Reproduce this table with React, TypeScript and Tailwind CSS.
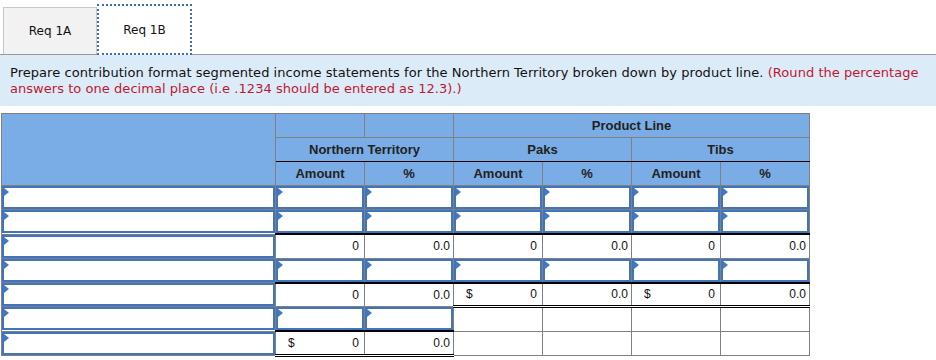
import React from 'react'

type Cell =
  | { k: 'in' }
  | { k: 'v'; t: string; d?: boolean }
  | { k: 'e' }

type Row = { cells: Cell[]; top?: boolean[]; dbl?: boolean[] }

const IN: Cell = { k: 'in' }
const E: Cell = { k: 'e' }
const v = (t: string, d?: boolean): Cell => ({ k: 'v', t, d })

const rows: Row[] = [
  { cells: [IN, IN, IN, IN, IN, IN, IN] },
  { cells: [IN, IN, IN, IN, IN, IN, IN] },
  {
    cells: [IN, v('0'), v('0.0'), v('0'), v('0.0'), v('0'), v('0.0')],
    top: [false, true, true, true, true, true, true],
  },
  { cells: [IN, IN, IN, IN, IN, IN, IN] },
  {
    cells: [IN, v('0'), v('0.0'), v('0', true), v('0.0'), v('0', true), v('0.0')],
    top: [false, true, true, true, true, true, true],
    dbl: [false, false, false, true, true, true, true],
  },
  { cells: [IN, IN, IN, E, E, E, E] },
  {
    cells: [IN, v('0', true), v('0.0'), E, E, E, E],
    top: [false, true, true, false, false, false, false],
    dbl: [false, true, true, false, false, false, false],
  },
]

function InputBox() {
  return (
    <div className="relative h-[23px] border-2 border-[#4074bb] bg-white">
      <span className="absolute left-0 top-0 h-0 w-0 border-y-[4px] border-l-[5px] border-y-transparent border-l-[#3f78c4]" />
    </div>
  )
}

function DataCell({ cell, top, dbl, pct }: { cell: Cell; top?: boolean; dbl?: boolean; pct: boolean }) {
  const cls = [
    'h-[24px] border border-[#808080] p-0 align-middle',
    top ? 'border-t-2 border-t-black' : '',
    dbl ? 'border-b-[3px] border-b-black border-double' : '',
  ].join(' ')
  if (cell.k === 'in') {
    return (
      <td className={cls}>
        <InputBox />
      </td>
    )
  }
  if (cell.k === 'e') return <td className={cls} />
  return (
    <td className={cls}>
      <div className={`flex items-center justify-between text-[12px] text-[#111] ${pct ? 'pr-[3px]' : 'pr-[5px]'} pl-[12px]`}>
        <span>{cell.d ? '$' : ''}</span>
        <span>{cell.t}</span>
      </div>
    </td>
  )
}

export default function App() {
  const head = 'border border-[#808080] bg-[#7aade5] p-0 text-center text-[13px] font-bold text-[#222]'
  return (
    <div className="h-[360px] w-[936px] overflow-hidden bg-white font-['Liberation_Sans',Arial,sans-serif]">
      <div className="flex h-[55px] items-end border-b border-[#9a9a9a] pl-[3px] font-['DejaVu_Sans',Verdana,sans-serif] text-[12px] text-[#111]">
        <div className="flex h-[47px] w-[94px] items-center justify-center border border-b-0 border-[#c8c8c8] bg-[#f2f2f2]">
          Req 1A
        </div>
        <div className="-mb-px flex h-[51px] w-[95px] items-center justify-center border-2 border-dotted border-[#3b6fb5] bg-white">
          Req 1B
        </div>
      </div>

      <div className="bg-[#dcebf8] px-[10px] pb-[9px] pt-[10px] font-['DejaVu_Sans',Verdana,sans-serif] text-[13px] leading-[16px] tracking-[0.045px] text-[#111]">
        Prepare contribution format segmented income statements for the Northern Territory broken down by product line.{' '}
        <span className="text-[#c01830]">
          (Round the percentage answers to one decimal place (i.e .1234 should be entered as 12.3).)
        </span>
      </div>

      <table className="ml-[1px] mt-[7px] w-[809px] table-fixed border-collapse">
        <colgroup>
          <col className="w-[274px]" />
          <col className="w-[89px]" />
          <col className="w-[89px]" />
          <col className="w-[89px]" />
          <col className="w-[89px]" />
          <col className="w-[89px]" />
          <col className="w-[89px]" />
        </colgroup>
        <thead>
          <tr className="h-[24px]">
            <th rowSpan={3} className={head} />
            <th className={head} />
            <th className={head} />
            <th colSpan={4} className={head}>
              Product Line
            </th>
          </tr>
          <tr className="h-[24px]">
            <th colSpan={2} className={`${head} border-b-black`}>
              Northern Territory
            </th>
            <th colSpan={2} className={`${head} border-y-black`}>
              Paks
            </th>
            <th colSpan={2} className={`${head} border-y-black`}>
              Tibs
            </th>
          </tr>
          <tr className="h-[24px]">
            {['Amount', '%', 'Amount', '%', 'Amount', '%'].map((h, i) => (
              <th key={i} className={`${head} border-t-black`}>
                {h}
              </th>
            ))}
          </tr>
        </thead>
        <tbody>
          {rows.map((r, ri) => (
            <tr key={ri}>
              {r.cells.map((c, ci) => (
                <DataCell key={ci} cell={c} top={r.top?.[ci]} dbl={r.dbl?.[ci]} pct={ci > 0 && ci % 2 === 0} />
              ))}
            </tr>
          ))}
        </tbody>
      </table>
    </div>
  )
}
